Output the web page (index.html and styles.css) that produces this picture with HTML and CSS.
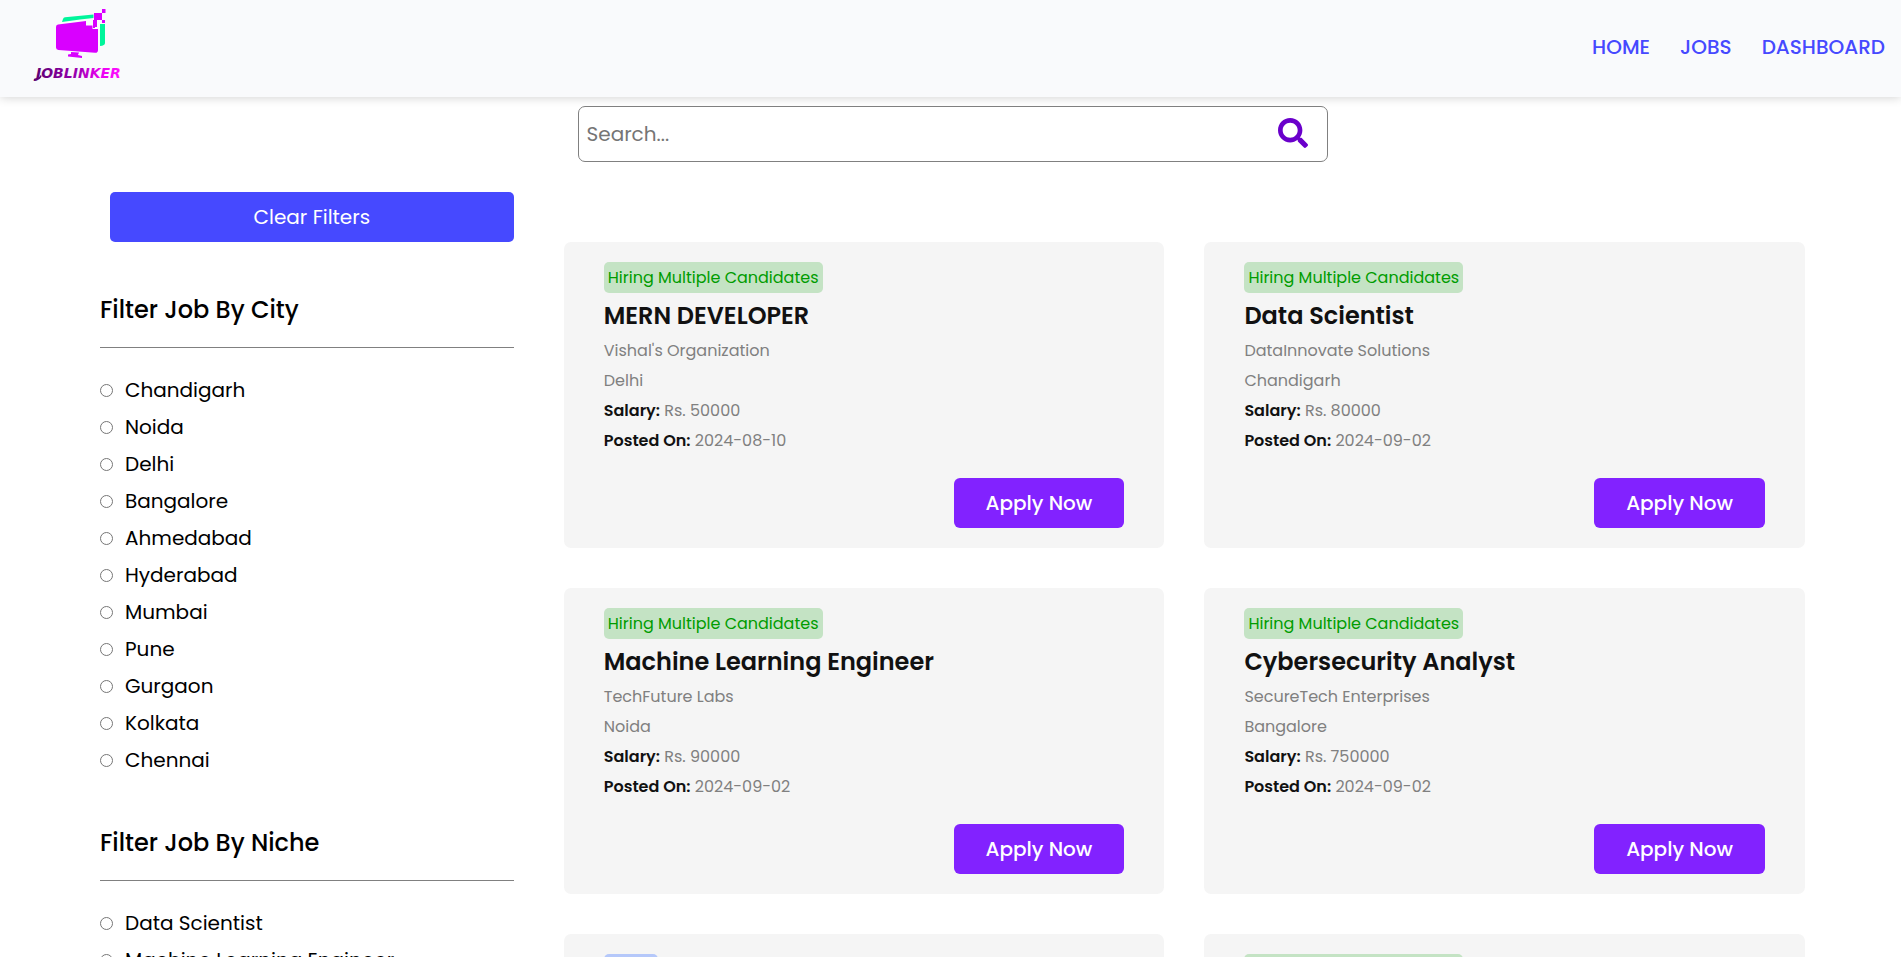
FILE: index.html
```html
<!DOCTYPE html>
<html lang="en">
<head>
<meta charset="utf-8">
<meta name="viewport" content="width=device-width, initial-scale=1">
<title>JobLinker</title>
<link rel="stylesheet" href="styles.css">
</head>
<body>
<header class="header">
  <a class="logo" href="#" aria-label="JobLinker">
    <svg width="120" height="94" viewBox="0 0 120 94">
      <defs>
        <linearGradient id="word" x1="0" x2="1" y1="0" y2="0">
          <stop offset="0" stop-color="#5a0070"/>
          <stop offset="0.5" stop-color="#9a00b0"/>
          <stop offset="0.75" stop-color="#e800f0"/>
          <stop offset="1" stop-color="#ff10ff"/>
        </linearGradient>
      </defs>
      <path d="M42 22l1-3q.5-1.500 2-1.700L73.500 14.500V18L60 19.500z" fill="#00f59b"/>
      <path d="M80 24h5v19q0 2.500-5 3z" fill="#00f59b"/>
      <path d="M38 24.500L66 21v4.500h6.500V29H78v21q0 3-3 2.800L38.500 50Q36 49.700 36 47.500V27q0-2.200 2-2.500z" fill="#d900ff"/>
      <path d="M74 13h8v7h-5v7h-4v-7h1zM82 9h3.500v4H82zM82 20h3v3h-3zM73 26h2v2h-2z" fill="#d900ff"/>
      <path d="M51 52l8 .5-1 2.500 4 1v2l-14-1.500V54.500l3-.5z" fill="#d900ff"/>
      <path d="M14 79.500q6 0 7-4" fill="none" stroke="#5a0070" stroke-width="1.500"/>
      <text class="logo-word" x="16" y="78" fill="url(#word)">JOBLINKER</text>
    </svg>
  </a>
  <nav class="nav">
    <a href="#">HOME</a>
    <a href="#">JOBS</a>
    <a href="#">DASHBOARD</a>
  </nav>
</header>

<main class="page">
  <form class="search">
    <input type="text" placeholder="Search..." aria-label="Search jobs">
    <button type="button" aria-label="Search">
      <svg width="30" height="30" viewBox="0 0 512 512" fill="#6a00cb"><path d="M505 442.700L405.300 343c-4.500-4.500-10.600-7-17-7H372c27.600-35.300 44-79.700 44-128C416 93.100 322.900 0 208 0S0 93.100 0 208s93.100 208 208 208c48.300 0 92.700-16.400 128-44v16.300c0 6.400 2.500 12.500 7 17l99.700 99.700c9.400 9.400 24.600 9.400 33.900 0l28.300-28.300c9.400-9.400 9.400-24.600.1-34zM208 336c-70.700 0-128-57.200-128-128 0-70.700 57.200-128 128-128 70.700 0 128 57.200 128 128 0 70.700-57.200 128-128 128z"/></svg>
    </button>
  </form>

  <div class="columns">
    <aside class="filters">
      <button class="clear" type="button">Clear Filters</button>
      <section class="filter">
        <h2>Filter Job By City</h2>
        <div class="options">
          <label><input type="radio" name="city">Chandigarh</label>
          <label><input type="radio" name="city">Noida</label>
          <label><input type="radio" name="city">Delhi</label>
          <label><input type="radio" name="city">Bangalore</label>
          <label><input type="radio" name="city">Ahmedabad</label>
          <label><input type="radio" name="city">Hyderabad</label>
          <label><input type="radio" name="city">Mumbai</label>
          <label><input type="radio" name="city">Pune</label>
          <label><input type="radio" name="city">Gurgaon</label>
          <label><input type="radio" name="city">Kolkata</label>
          <label><input type="radio" name="city">Chennai</label>
        </div>
      </section>
      <section class="filter">
        <h2>Filter Job By Niche</h2>
        <div class="options">
          <label><input type="radio" name="niche">Data Scientist</label>
          <label><input type="radio" name="niche">Machine Learning Engineer</label>
        </div>
      </section>
    </aside>

    <div class="jobs">
      <article class="card">
        <span class="badge">Hiring Multiple Candidates</span>
        <h3>MERN DEVELOPER</h3>
        <p>Vishal's Organization</p>
        <p>Delhi</p>
        <p><b>Salary:</b> Rs. 50000</p>
        <p><b>Posted On:</b> 2024-08-10</p>
        <a class="apply" href="#">Apply Now</a>
      </article>
      <article class="card">
        <span class="badge">Hiring Multiple Candidates</span>
        <h3>Data Scientist</h3>
        <p>DataInnovate Solutions</p>
        <p>Chandigarh</p>
        <p><b>Salary:</b> Rs. 80000</p>
        <p><b>Posted On:</b> 2024-09-02</p>
        <a class="apply" href="#">Apply Now</a>
      </article>
      <article class="card">
        <span class="badge">Hiring Multiple Candidates</span>
        <h3>Machine Learning Engineer</h3>
        <p>TechFuture Labs</p>
        <p>Noida</p>
        <p><b>Salary:</b> Rs. 90000</p>
        <p><b>Posted On:</b> 2024-09-02</p>
        <a class="apply" href="#">Apply Now</a>
      </article>
      <article class="card">
        <span class="badge">Hiring Multiple Candidates</span>
        <h3>Cybersecurity Analyst</h3>
        <p>SecureTech Enterprises</p>
        <p>Bangalore</p>
        <p><b>Salary:</b> Rs. 750000</p>
        <p><b>Posted On:</b> 2024-09-02</p>
        <a class="apply" href="#">Apply Now</a>
      </article>
      <article class="card">
        <span class="badge badge-single">Hiring</span>
      </article>
      <article class="card">
        <span class="badge">Hiring Multiple Candidates</span>
      </article>
    </div>
  </div>
</main>
</body>
</html>
```
FILE: styles.css
```css
* {
  box-sizing: border-box;
  margin: 0;
  padding: 0;
}

html {
  scrollbar-width: none;
}

body {
  font-family: Poppins, Inter, "Open Sans", sans-serif;
  font-size: 20px;
  color: #000;
  background: #fff;
}

a {
  text-decoration: none;
}

button,
input {
  font: inherit;
}

.header {
  display: flex;
  align-items: center;
  justify-content: space-between;
  padding: 0 16px 3px 20px;
  background: #f9fafc;
  box-shadow: 0 0 10px rgba(0, 0, 0, 0.2);
}

.logo svg {
  display: block;
}

.logo-word {
  font: italic bold 14px "DejaVu Sans", sans-serif;
}

.nav {
  display: flex;
  gap: 30px;
  font-weight: 500;
}

.nav a {
  color: #4649ff;
}

.page {
  padding: 9px 96px 40px 100px;
}

.search {
  display: flex;
  align-items: center;
  max-width: 750px;
  height: 56px;
  margin: 0 auto 30px;
  padding: 0 19px 0 8px;
  border: 1px solid #808080;
  border-radius: 7px;
}

.search input {
  flex: 1;
  min-width: 0;
  border: 0;
  outline: 0;
  background: none;
}

.search input::placeholder {
  color: #757575;
}

.search button {
  padding-bottom: 2px;
  border: 0;
  background: none;
}

.search svg {
  display: block;
}

.columns {
  display: grid;
  grid-template-columns: 1fr 3fr;
  gap: 50px;
  align-items: start;
}

.filters {
  display: flex;
  flex-direction: column;
  gap: 46px;
}

.clear {
  height: 50px;
  margin: 0 0 4px 10px;
  border: 0;
  border-radius: 5px;
  color: #fff;
  background: #4649ff;
}

.filter h2 {
  padding-bottom: 19px;
  border-bottom: 1px solid #808080;
  font-size: 24px;
  font-weight: 500;
  line-height: 36px;
}

.options {
  padding-top: 24px;
}

.options label {
  display: flex;
  align-items: center;
  gap: 12px;
  line-height: 37px;
}

.options input {
  width: 13px;
  height: 13px;
}

.jobs {
  display: grid;
  grid-template-columns: 1fr 1fr;
  gap: 40px;
  margin-top: 50px;
}

.card {
  display: flex;
  flex-direction: column;
  align-items: flex-start;
  gap: 6px;
  padding: 20px 40px;
  border-radius: 7px;
  background: #f5f5f5;
}

.badge {
  padding: 0 4px;
  border-radius: 5px;
  font-size: 16px;
  line-height: 31px;
  color: #009c00;
  background: #c4e3c4;
}

.badge-single {
  color: #2f5fe0;
  background: #b5c8fa;
}

.card h3 {
  font-size: 24px;
  font-weight: 600;
  line-height: 34px;
  color: #111;
}

.card p {
  font-size: 16px;
  line-height: 24px;
  color: #808080;
}

.card b {
  font-weight: 600;
  color: #111;
}

.apply {
  align-self: flex-end;
  margin-top: 19px;
  padding: 0 32px;
  border-radius: 6px;
  font-weight: 500;
  line-height: 50px;
  color: #fff;
  background: #8222ff;
}
```
